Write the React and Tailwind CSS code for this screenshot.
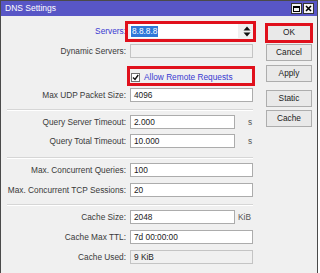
import React from 'react';

const font = { fontFamily: '"Liberation Sans", Arial, sans-serif' };

function Field({ value, width = 'w-[123px]', disabled }) {
  return (
    <div
      className={`${width} h-[14px] ml-[4px] border flex items-center pl-[3px] leading-none ${
        disabled ? 'bg-[#f0f0f0] border-[#c4c4c4]' : 'bg-white border-[#acacac]'
      } text-[#222]`}
    >
      {value}
    </div>
  );
}

function Row({ label, className = '', children }) {
  return (
    <div className={`flex items-center h-[14px] ${className}`}>
      <div className="w-[125px] text-right text-[#3a3a3a] leading-none whitespace-nowrap">{label}</div>
      {children}
    </div>
  );
}

function Separator({ className = '' }) {
  return <div className={`ml-[6px] w-[246px] border-t border-[#d6d6d6] border-b border-b-white ${className}`} />;
}

function Button({ label, className = '', children }) {
  return (
    <div
      className={`relative w-[46px] h-[17px] border border-[#adadad] bg-[#e9e9e9] flex items-center justify-center text-[#222] leading-none ${className}`}
    >
      {label}
      {children}
    </div>
  );
}

export default function App() {
  return (
    <div className="w-[320px] h-[273px] bg-white overflow-hidden text-[8.3px]" style={font}>
      <div className="w-[318px] h-[273px] border-t border-x border-[#4a4a4a] bg-[#f0f0f0] flex flex-col">
        {/* title bar */}
        <div className="h-[15px] bg-[#5856c6] flex items-center justify-between pl-[4px] pr-[3px]">
          <span className="text-white text-[8.5px] leading-none">DNS Settings</span>
          <div className="flex gap-[1px]">
            <div className="w-[11px] h-[11px] bg-[#f4f4f4] border border-[#333] flex items-center justify-center">
              <div className="w-[7px] h-[6px] border border-black border-t-2" />
            </div>
            <div className="w-[11px] h-[11px] bg-[#f4f4f4] border border-[#333] flex items-center justify-center">
              <svg width="7" height="7" viewBox="0 0 7 7">
                <path d="M1 1 L6 6 M6 1 L1 6" stroke="#000" strokeWidth="1.6" />
              </svg>
            </div>
          </div>
        </div>

        {/* body */}
        <div className="flex flex-1">
          <div className="w-[265px] flex flex-col">
            <Row label={<span className="text-[#3838d0]">Servers:</span>} className="mt-[8px] relative">
              <div className="w-[108px] h-[14px] ml-[4px] bg-white flex items-center pl-[1px]">
                <span className="bg-[#2f78d8] text-white px-[1px] leading-[11px]">8.8.8.8</span>
              </div>
              <svg className="ml-[5px]" width="8" height="11" viewBox="0 0 8 11">
                <path d="M4 0.5 L7.5 4.5 L0.5 4.5 Z M4 10.5 L7.5 6.5 L0.5 6.5 Z" fill="#111" />
              </svg>
              <div className="absolute left-[124px] top-[-3px] w-[131px] h-[21px] border-[3px] border-[#e0101c]" />
            </Row>
            <Row label="Dynamic Servers:" className="mt-[6px]">
              <Field value="" disabled />
            </Row>
            <div className="flex items-center h-[14px] mt-[12px] relative">
              <div className="w-[130px]" />
              <div className="w-[9px] h-[9px] bg-white border border-[#707070] flex items-center justify-center">
                <svg width="7" height="7" viewBox="0 0 7 7">
                  <path d="M1 3.5 L3 5.5 L6.2 1" stroke="#111" strokeWidth="1.4" fill="none" />
                </svg>
              </div>
              <span className="ml-[4px] text-[#3838d0] leading-none">Allow Remote Requests</span>
              <div className="absolute left-[126px] top-[-4px] w-[128px] h-[20px] border-[3px] border-[#e0101c]" />
            </div>
            <Row label="Max UDP Packet Size:" className="mt-[4px]">
              <Field value="4096" />
            </Row>
            <Separator className="mt-[7px]" />
            <Row label="Query Server Timeout:" className="mt-[4px]">
              <Field value="2.000" width="w-[105px]" />
              <span className="ml-[13px] text-[#555] leading-none">s</span>
            </Row>
            <Row label="Query Total Timeout:" className="mt-[5px]">
              <Field value="10.000" width="w-[105px]" />
              <span className="ml-[13px] text-[#555] leading-none">s</span>
            </Row>
            <Separator className="mt-[9px]" />
            <Row label="Max. Concurrent Queries:" className="mt-[4px]">
              <Field value="100" />
            </Row>
            <Row label="Max. Concurrent TCP Sessions:" className="mt-[6px]">
              <Field value="20" />
            </Row>
            <Separator className="mt-[7px]" />
            <Row label="Cache Size:" className="mt-[4px]">
              <Field value="2048" width="w-[105px]" />
              <span className="ml-[3px] text-[#555] leading-none">KiB</span>
            </Row>
            <Row label="Cache Max TTL:" className="mt-[6px]">
              <Field value="7d 00:00:00" />
            </Row>
            <Row label="Cache Used:" className="mt-[6px]">
              <Field value="9 KiB" disabled />
            </Row>
          </div>

          <div className="flex flex-col">
            <Button label="OK" className="mt-[8px]">
              <div className="absolute left-[-2px] top-[-2px] w-[48px] h-[20px] border-[3px] border-[#e0101c]" />
            </Button>
            <Button label="Cancel" className="mt-[3px]" />
            <Button label="Apply" className="mt-[4px]" />
            <Button label="Static" className="mt-[8px]" />
            <Button label="Cache" className="mt-[3px]" />
          </div>
        </div>
      </div>
    </div>
  );
}
